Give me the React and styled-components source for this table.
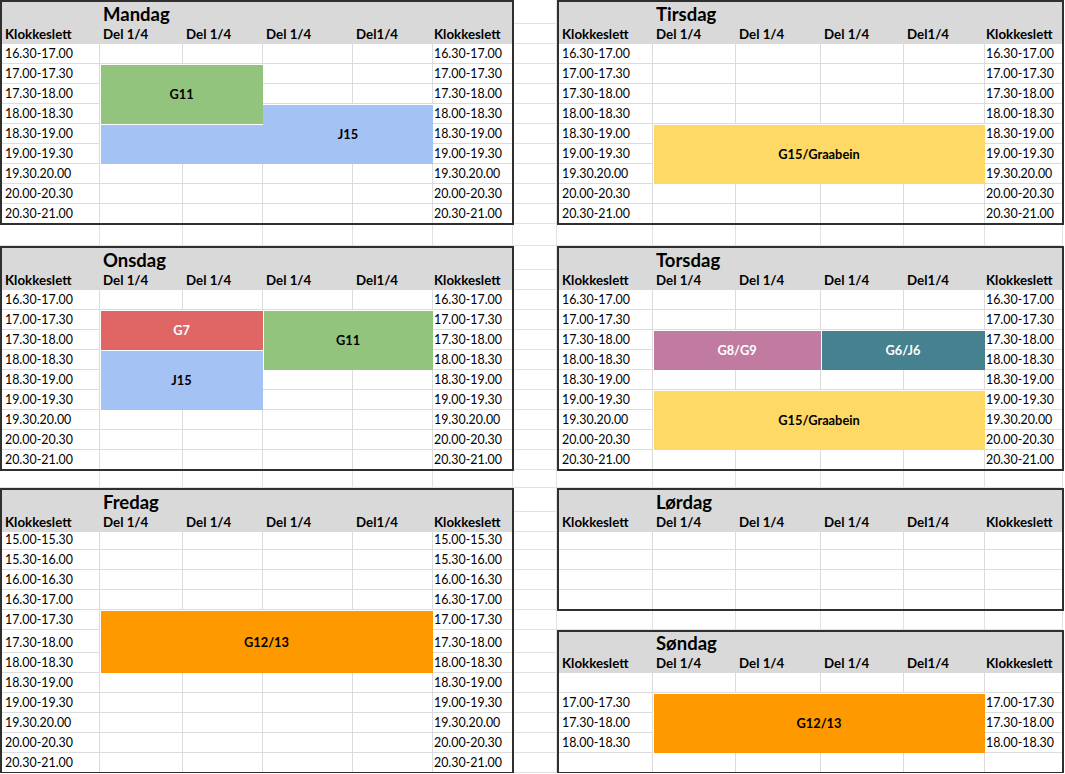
import React from 'react';
import styled, { createGlobalStyle } from 'styled-components';

const GlobalStyle = createGlobalStyle`
  html, body {
    margin: 0;
    padding: 0;
    background: #fff;
  }
  body {
    font-family: Lato, 'Open Sans', sans-serif;
    color: #000;
    overflow: hidden;
  }
`;

const LEFT_COLS = [100, 83, 80, 90, 80, 80];
const RIGHT_COLS = [96, 83, 85, 83, 81, 78];
const SHEET_COLS = [...LEFT_COLS, 44, ...RIGHT_COLS];

const NINE = Array(9).fill(20);
const WEEK_ROWS = [24, 20, ...NINE];
const FRI_ROWS = [24, 20, 18, 20, 20, 20, 20, 23, 20, 20, 20, 20, 20, 20];
const SHEET_ROWS = [...WEEK_ROWS, 22, ...WEEK_ROWS, 18, ...FRI_ROWS];

const px = (list) => list.map((v) => `${v}px`).join(' ');

const HEADS = ['Klokkeslett', 'Del 1/4', 'Del 1/4', 'Del 1/4', 'Del1/4', 'Klokkeslett'];

const WEEK_TIMES = [
  '16.30-17.00', '17.00-17.30', '17.30-18.00', '18.00-18.30', '18.30-19.00',
  '19.00-19.30', '19.30.20.00', '20.00-20.30', '20.30-21.00',
];

const FRI_TIMES = [
  '15.00-15.30', '15.30-16.00', '16.00-16.30', '16.30-17.00', ...WEEK_TIMES.slice(1, 3),
  '18.00-18.30', '18.30-19.00', '19.00-19.30', '19.30.20.00', '20.00-20.30', '20.30-21.00',
];

const COLORS = {
  green: '#93c47d',
  blue: '#a4c2f4',
  red: '#e06666',
  yellow: '#ffd966',
  orange: '#ff9900',
  mauve: '#c27ba0',
  teal: '#45818e',
};

// blocks: c/r are [start, end) in panel grid lines (title row = 1, header = 2)
const DAYS = [
  {
    name: 'Mandag', col: 1, row: 1, cols: LEFT_COLS, rows: WEEK_ROWS, times: WEEK_TIMES,
    blocks: [
      { label: 'G11', color: 'green', c: [2, 4], r: [4, 7] },
      { label: '', color: 'blue', c: [2, 4], r: [7, 9] },
      { label: 'J15', color: 'blue', c: [4, 6], r: [6, 9], seamless: true },
    ],
  },
  {
    name: 'Tirsdag', col: 8, row: 1, cols: RIGHT_COLS, rows: WEEK_ROWS, times: WEEK_TIMES,
    blocks: [{ label: 'G15/Graabein', color: 'yellow', c: [2, 6], r: [7, 10] }],
  },
  {
    name: 'Onsdag', col: 1, row: 13, cols: LEFT_COLS, rows: WEEK_ROWS, times: WEEK_TIMES,
    blocks: [
      { label: 'G7', color: 'red', c: [2, 4], r: [4, 6], light: true },
      { label: 'J15', color: 'blue', c: [2, 4], r: [6, 9] },
      { label: 'G11', color: 'green', c: [4, 6], r: [4, 7] },
    ],
  },
  {
    name: 'Torsdag', col: 8, row: 13, cols: RIGHT_COLS, rows: WEEK_ROWS, times: WEEK_TIMES,
    blocks: [
      { label: 'G8/G9', color: 'mauve', c: [2, 4], r: [5, 7], light: true },
      { label: 'G6/J6', color: 'teal', c: [4, 6], r: [5, 7], light: true },
      { label: 'G15/Graabein', color: 'yellow', c: [2, 6], r: [8, 11] },
    ],
  },
  {
    name: 'Fredag', col: 1, row: 25, cols: LEFT_COLS, rows: FRI_ROWS, times: FRI_TIMES,
    blocks: [{ label: 'G12/13', color: 'orange', c: [2, 6], r: [7, 10] }],
  },
  {
    name: 'Lørdag', col: 8, row: 25, cols: RIGHT_COLS, rows: [24, 20, 18, 20, 20, 20],
    times: ['', '', '', ''], blocks: [],
  },
  {
    name: 'Søndag', col: 8, row: 32, cols: RIGHT_COLS, rows: [23, 20, 20, 20, 20, 20, 20],
    times: ['', '17.00-17.30', '17.30-18.00', '18.00-18.30', ''],
    blocks: [{ label: 'G12/13', color: 'orange', c: [2, 6], r: [4, 7] }],
  },
];

const Sheet = styled.div`
  display: grid;
  width: ${SHEET_COLS.reduce((a, b) => a + b, 0)}px;
  height: ${SHEET_ROWS.reduce((a, b) => a + b, 0)}px;

  > * {
    grid-area: 1 / 1;
  }
`;

const SheetGrid = styled.div`
  display: grid;
  grid-template-columns: ${px(SHEET_COLS)};
  grid-template-rows: ${px(SHEET_ROWS)};
`;

const BackCell = styled.div`
  border-right: 1px solid #e2e2e2;
  border-bottom: 1px solid #e2e2e2;
`;

const Panel = styled.section`
  grid-column: ${(p) => p.$col} / span 6;
  grid-row: ${(p) => p.$row} / span ${(p) => p.$span};
  position: relative;
  display: grid;
  background: #fff;

  > * {
    grid-area: 1 / 1;
  }

  &::after {
    content: '';
    position: absolute;
    top: 0;
    left: 0;
    right: -1px;
    bottom: -1px;
    border: 2px solid #2f2f2f;
    pointer-events: none;
  }
`;

const Table = styled.div`
  display: grid;
  grid-template-columns: ${(p) => px(p.$cols)};
  grid-template-rows: ${(p) => px(p.$rows)};
`;

const Corner = styled.div`
  background: #d9d9d9;
`;

const Title = styled.div`
  grid-column: 2 / span 5;
  background: #d9d9d9;
  display: flex;
  align-items: flex-end;
  padding-left: 3px;
  font-size: 18.5px;
  font-weight: 700;
  line-height: 20px;
  white-space: nowrap;
`;

const pad = (edge) => (edge === 'start' ? '5px' : edge === 'end' ? '1px' : '3px');

const Head = styled.div`
  background: #d9d9d9;
  display: flex;
  align-items: flex-end;
  padding: 0 0 2px ${(p) => pad(p.$edge)};
  font-size: 13.3px;
  font-weight: 700;
  line-height: 16px;
  white-space: nowrap;
`;

const Cell = styled.div`
  border-right: 1px solid #dcdcdc;
  border-bottom: 1px solid #dcdcdc;
  display: flex;
  align-items: flex-end;
  padding: 0 0 2px ${(p) => pad(p.$edge)};
  font-size: 12.4px;
  line-height: 15px;
  white-space: nowrap;
  overflow: hidden;
`;

const Block = styled.div`
  grid-column: ${(p) => p.$c[0]} / ${(p) => p.$c[1]};
  grid-row: ${(p) => p.$r[0]} / ${(p) => p.$r[1]};
  background: ${(p) => COLORS[p.$color]};
  color: ${(p) => (p.$light ? '#fff' : '#000')};
  box-shadow: ${(p) => (p.$seamless ? 'inset 0 1px 0 #fff' : 'inset 1px 1px 0 #fff')};
  display: flex;
  align-items: center;
  justify-content: center;
  font-size: 12.8px;
  font-weight: 700;
`;

const edgeOf = (i) => (i === 0 ? 'start' : i === 5 ? 'end' : undefined);

function DayPanel({ day }) {
  return (
    <Panel $col={day.col} $row={day.row} $span={day.rows.length}>
      <Table $cols={day.cols} $rows={day.rows}>
        <Corner />
        <Title>{day.name}</Title>
        {HEADS.map((h, i) => (
          <Head key={`h${i}`} $edge={edgeOf(i)}>{h}</Head>
        ))}
        {day.times.map((t, r) =>
          [0, 1, 2, 3, 4, 5].map((i) => (
            <Cell key={`${r}-${i}`} $edge={edgeOf(i)}>
              {i === 0 || i === 5 ? t : ''}
            </Cell>
          ))
        )}
      </Table>
      <Table $cols={day.cols} $rows={day.rows}>
        {day.blocks.map((b, i) => (
          <Block
            key={i}
            $c={b.c}
            $r={b.r}
            $color={b.color}
            $light={b.light}
            $seamless={b.seamless}
          >
            {b.label}
          </Block>
        ))}
      </Table>
    </Panel>
  );
}

export default function App() {
  const backCells = SHEET_ROWS.length * SHEET_COLS.length;
  return (
    <>
      <GlobalStyle />
      <Sheet>
        <SheetGrid>
          {Array.from({ length: backCells }, (_, i) => (
            <BackCell key={i} />
          ))}
        </SheetGrid>
        <SheetGrid>
          {DAYS.map((d) => (
            <DayPanel key={d.name} day={d} />
          ))}
        </SheetGrid>
      </Sheet>
    </>
  );
}
